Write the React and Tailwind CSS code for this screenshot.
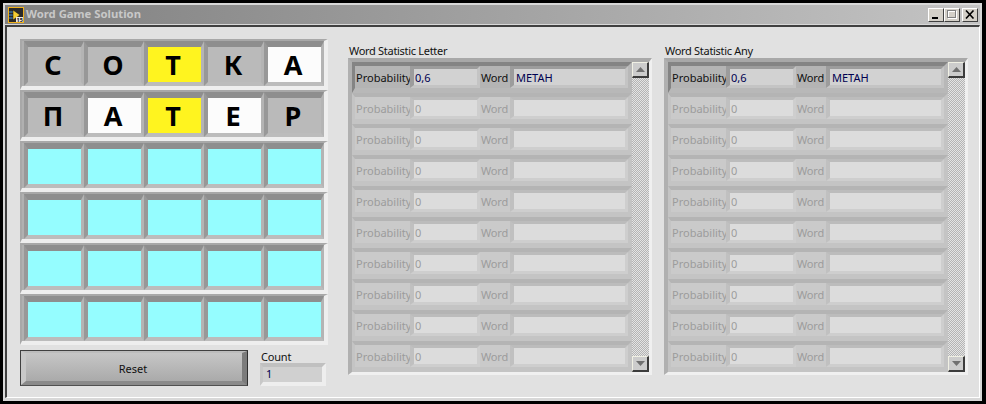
const ui = { fontFamily: '"Noto Sans", sans-serif' };

function Cell({ ch, fill }) {
  return (
    <div className="w-[60px] h-[45px] border-t-[6px] border-l-[4px] border-r-[3px] border-b-[4px] border-t-[#8e8e8e] border-l-[#989898] border-r-[#b4b4b4] border-b-[#bcbcbc]">
      <div className={`w-full h-full flex items-center justify-center pr-[3px] pb-[1px] text-[27px] leading-none font-bold text-black ${fill}`}>{ch}</div>
    </div>
  );
}

function GridRow({ cells }) {
  return (
    <div className="h-[51px] border-t-[2px] border-l-[2px] border-r-[4px] border-b-[4px] border-t-[#a8a8a8] border-l-[#a8a8a8] border-r-[#eeeeee] border-b-[#eeeeee] bg-[#b0b0b0] pl-[2px] flex items-start">
      {cells.map((c, i) => <Cell key={i} ch={c[0]} fill={c[1]} />)}
    </div>
  );
}

const G = "bg-[#bababa]", W = "bg-[#fcfcfc]", Y = "bg-[#fff41f]", C = "bg-[#95fdff]";
const empty = [["", C], ["", C], ["", C], ["", C], ["", C]];

function Field({ active, w, pl, children }) {
  return (
    <div className={`${w} ${pl} h-[22px] pt-[2px] border-t-[3px] border-l-[4px] border-r-[3px] border-b-[3px] text-[11px] flex items-center overflow-hidden ${active ? "border-t-[#9c9c9c] border-l-[#9c9c9c] border-r-[#c4c4c4] border-b-[#c4c4c4] bg-[#d2d2d2] text-[#000050]" : "border-t-[#bcbcbc] border-l-[#c0c0c0] border-r-[#cecece] border-b-[#cecece] bg-[#dcdcdc] text-[#9c9c9c]"}`}>{children}</div>
  );
}

function StatRow({ active, prob, word }) {
  const text = active ? "text-[#111]" : "text-[#9c9c9c]";
  return (
    <div className={`h-[31px] flex items-start border-t-[4px] border-l-[3px] border-r-[4px] border-b-[5px] ${active ? "border-t-[#848484] border-l-[#848484] border-r-[#b8b8b8] border-b-[#b8b8b8] bg-[#b4b4b4]" : "border-t-[#b4b4b4] border-l-[#c4c4c4] border-r-[#c4c4c4] border-b-[#c4c4c4] bg-[#cacaca]"}`}>
      <div className={`w-[55px] h-[22px] pt-[2px] text-[11px] pl-[1px] flex items-center ${text}`}>Probability</div>
      <Field active={active} w="w-[70px]" pl="pl-[1px]">{prob}</Field>
      <div className={`w-[30px] h-[22px] pt-[2px] text-[11px] pl-[1px] flex items-center tracking-[-0.2px] ${text}`}>Word</div>
      <Field active={active} w="w-[118px]" pl="pl-[2px]">{word}</Field>
    </div>
  );
}

function ArrowBtn({ up }) {
  return (
    <div className="h-[16px] bg-[#cccccc] border-t border-l border-t-[#f0f0e4] border-l-[#f0f0e4] border-r-2 border-b-2 border-r-[#3c3c3c] border-b-[#3c3c3c] flex items-center justify-center">
      <svg width="9" height="5" viewBox="0 0 9 5">
        <path d={up ? "M4.5 0 L9 5 L0 5 Z" : "M0 0 L9 0 L4.5 5 Z"} fill="#707070" />
      </svg>
    </div>
  );
}

function Stat({ title }) {
  const rows = Array.from({ length: 9 });
  return (
    <div className="w-[304px] flex flex-col">
      <div className="text-[11px] leading-[14px] h-[14px] pl-[1px] tracking-[-0.3px] text-[#111]">{title}</div>
      <div className="h-[317px] border-t-[4px] border-l-[4px] border-r-[3px] border-b-[3px] border-t-[#a8a8a8] border-l-[#b0b0b0] border-r-[#f0f0f0] border-b-[#f0f0f0] flex bg-[#d4d4d4]">
        <div className="w-[280px]">
          <StatRow active prob="0,6" word="МЕТАН" />
          {rows.map((_, i) => <StatRow key={i} prob="0" word="" />)}
        </div>
        <div className="flex-1 flex flex-col bg-[repeating-conic-gradient(#b4b4b4_0_25%,#e4e4e4_0_50%)] bg-[length:2px_2px]">
          <ArrowBtn up />
          <div className="flex-1" />
          <ArrowBtn />
        </div>
      </div>
    </div>
  );
}

export default function App() {
  return (
    <div className="w-[986px] h-[404px] bg-black pt-[3px] pl-[3px] pr-[4px] pb-[3px]" style={ui}>
      <div className="h-full bg-[#d8d8d8] flex flex-col pt-[2px] px-[2px] pb-[3px]">
        <div className="h-[19px] shrink-0 bg-gradient-to-r from-[#808080] to-[#c4c4c4] flex items-center pl-[3px] pr-[2px]">
          <svg width="16" height="16" viewBox="0 0 16 16" className="shrink-0">
            <rect x="0.5" y="0.5" width="15" height="15" fill="#2a2a2a" stroke="#f2b21c" />
            <path d="M1 5 H5 M1 8 H5 M1 11 H5" stroke="#3f8fd8" strokeWidth="1" />
            <path d="M5 3 L12 8 L5 13 Z" fill="#f4cc30" stroke="#111" strokeWidth="0.5" />
            <rect x="8" y="10" width="7" height="5" fill="#e8e8e8" />
            <text x="8.5" y="14.8" fontSize="5.5" fontWeight="700" fill="#111">15</text>
          </svg>
          <span className="ml-[2px] text-[11.3px] font-bold text-[#c8c8c8]">Word Game Solution</span>
          <div className="ml-auto flex">
            {["min", "max", "close"].map((k) => (
              <div key={k} className={`w-[16px] h-[14px] bg-[#d4d0c8] border-t border-l border-t-white border-l-white border-r border-b border-r-[#404040] border-b-[#404040] flex items-center justify-center ${k === "close" ? "ml-[2px]" : ""}`}>
                <svg width="10" height="9" viewBox="0 0 10 9">
                  {k === "min" && <rect x="1" y="7" width="6" height="2" fill="#000" />}
                  {k === "max" && <>
                    <rect x="1.5" y="1.5" width="8" height="7" fill="none" stroke="#fff" strokeWidth="1" />
                    <rect x="0.5" y="0.5" width="8" height="7" fill="none" stroke="#808080" strokeWidth="1" />
                  </>}
                  {k === "close" && <path d="M1 0.5 L8.5 8.5 M8.5 0.5 L1 8.5" stroke="#000" strokeWidth="1.6" />}
                </svg>
              </div>
            ))}
          </div>
        </div>
        <div className="flex-1 mt-[1px] border-t-[2px] border-l-[2px] border-t-[#404040] border-l-[#404040] border-r border-b border-r-white border-b-white bg-[#e1e1e1] pl-[13px] pt-[12px]">
          <div className="flex">
            <div className="w-[308px]">
              <GridRow cells={[["С", G], ["О", G], ["Т", Y], ["К", G], ["А", W]]} />
              <GridRow cells={[["П", G], ["А", W], ["Т", Y], ["Е", W], ["Р", G]]} />
              <GridRow cells={empty} />
              <GridRow cells={empty} />
              <GridRow cells={empty} />
              <GridRow cells={empty} />
              <div className="flex mt-[5px]">
                <button className="w-[228px] h-[36px] border border-[#404040] border-r-[#303030] border-b-[#505050]">
                  <div className="w-full h-full pt-[5px] pr-[2px] border-t-[2px] border-l-[5px] border-r-[5px] border-b-[4px] border-t-[#bcbcbc] border-l-[#c8c8c8] border-r-[#7c7c7c] border-b-[#8a8a8a] bg-gradient-to-b from-[#c6c6c6] to-[#aaaaaa] text-[11px] text-[#111] flex items-center justify-center">Reset</div>
                </button>
                <div className="ml-[12px] w-[66px]">
                  <div className="text-[11px] leading-[13px] pl-[1px] tracking-[-0.2px] text-[#111]">Count</div>
                  <div className="h-[23px] border-t-[4px] border-l-[3px] border-r-[4px] border-b-[4px] border-t-[#c0c0c0] border-l-[#c8c8c8] border-r-[#eeeeee] border-b-[#eeeeee] bg-[#d0d0d0] text-[11px] pl-[3px] flex items-center text-[#000050]">1</div>
                </div>
              </div>
            </div>
            <div className="ml-[20px] flex gap-[12px] mt-[5px]">
              <Stat title="Word Statistic Letter" />
              <Stat title="Word Statistic Any" />
            </div>
          </div>
        </div>
      </div>
    </div>
  );
}
